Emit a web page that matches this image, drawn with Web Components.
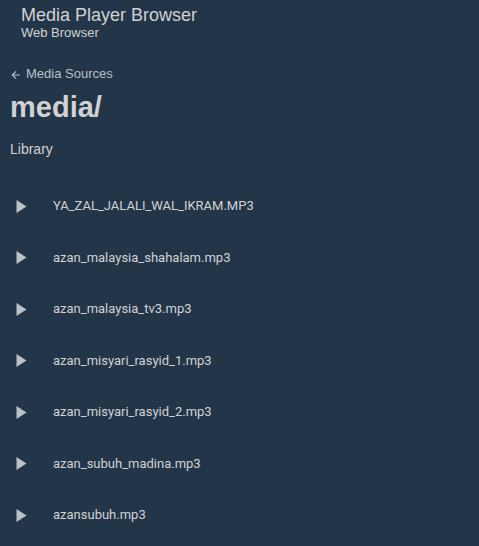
<!DOCTYPE html>
<html lang="en">
<head>
<meta charset="utf-8">
<title>Media Player Browser</title>
<style>
  html { background: #233549; }
  body { margin: 0; color: #d2d2d2; font-family: "Liberation Sans", Arial, sans-serif; }
</style>
</head>
<body>
<media-browser>
  <browser-header slot="header">
    <span slot="title">Media Player Browser</span>
    <span slot="device">Web Browser</span>
  </browser-header>
  <browser-heading>
    <span slot="back">Media Sources</span>
    <span slot="title">media/</span>
    <span slot="kind">Library</span>
  </browser-heading>
  <media-list>
    <media-row>YA_ZAL_JALALI_WAL_IKRAM.MP3</media-row>
    <media-row>azan_malaysia_shahalam.mp3</media-row>
    <media-row>azan_malaysia_tv3.mp3</media-row>
    <media-row>azan_misyari_rasyid_1.mp3</media-row>
    <media-row>azan_misyari_rasyid_2.mp3</media-row>
    <media-row>azan_subuh_madina.mp3</media-row>
    <media-row>azansubuh.mp3</media-row>
  </media-list>
</media-browser>
<script>
  const define = (name, html, setup) => {
    const template = document.createElement('template');
    template.innerHTML = html;
    customElements.define(name, class extends HTMLElement {
      constructor() {
        super();
        this.attachShadow({ mode: 'open' }).append(template.content.cloneNode(true));
      }
      connectedCallback() { if (setup) setup(this); }
    });
  };

  define('media-browser', `
    <style>
      :host { display: flex; flex-direction: column; }
      main { display: flex; flex-direction: column; gap: 21px; padding: 0 10px; }
    </style>
    <slot name="header"></slot>
    <main><slot></slot></main>`);

  define('browser-header', `
    <style>
      :host { display: block; padding: 5px 21px 23px; }
      .title { font: 18px/20px "Liberation Sans", Arial, sans-serif; }
      .device { font: 13px/16px "Liberation Sans", Arial, sans-serif; }
    </style>
    <header>
      <div class="title"><slot name="title"></slot></div>
      <div class="device"><slot name="device"></slot></div>
    </header>`);

  define('browser-heading', `
    <style>
      :host { display: block; }
      button { display: flex; align-items: center; gap: 4px; margin: 0; padding: 0; border: 0;
        background: none; color: #b9c0c7; font: 13px/20px "Liberation Sans", Arial, sans-serif; cursor: pointer; }
      svg { width: 12px; height: 12px; margin-top: 2px; }
      h1 { margin: 3px 0 0; font: bold 29px/40px "Liberation Sans", Arial, sans-serif; }
      h2 { margin: 12px 0 0; font: 14px/20px "Liberation Sans", Arial, sans-serif; }
    </style>
    <button type="button">
      <svg viewBox="0 0 12 12" aria-hidden="true"><path d="M10 6H2.5M6 2.3 2.3 6 6 9.7" fill="none" stroke="currentColor" stroke-width="1.1"/></svg>
      <slot name="back"></slot>
    </button>
    <h1><slot name="title"></slot></h1>
    <h2><slot name="kind"></slot></h2>`);

  define('media-list', `
    <style>
      :host { display: grid; grid-auto-rows: 52px 51px; }
    </style>
    <slot></slot>`, el => el.setAttribute('role', 'list'));

  define('media-row', `
    <style>
      :host { display: flex; align-items: center; gap: 20px; }
      button { display: flex; margin: 0; padding: 0; border: 0; background: none; color: #bcc1c7; cursor: pointer; }
      svg { width: 23px; height: 23px; }
      span { font: 13px/20px Roboto, sans-serif; }
    </style>
    <button type="button" aria-labelledby="name">
      <svg viewBox="0 0 23 23" aria-hidden="true"><path d="M6.5 5v13L16.5 11.5z" fill="currentColor"/></svg>
    </button>
    <span id="name"><slot></slot></span>`, el => el.setAttribute('role', 'listitem'));
</script>
</body>
</html>
